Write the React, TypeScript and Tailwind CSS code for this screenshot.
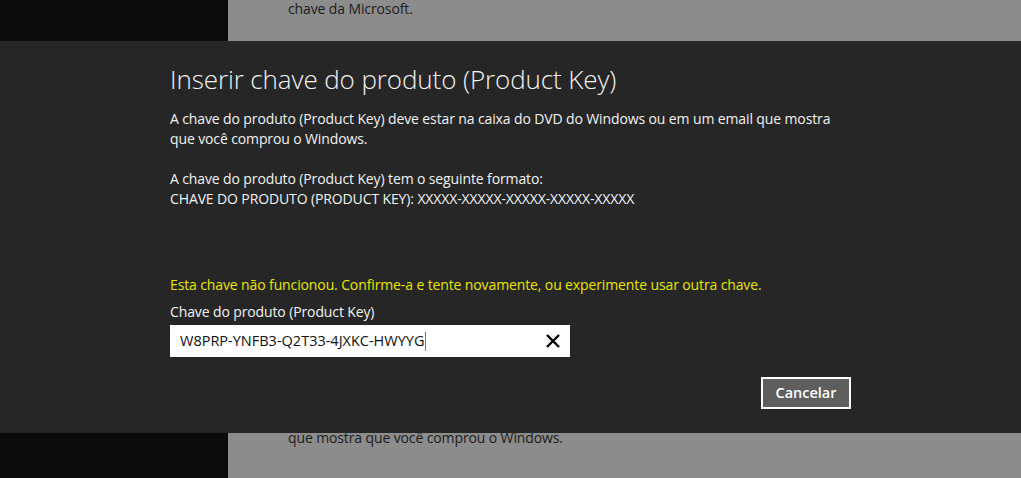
export default function App() {
  const font = { fontFamily: '"Open Sans", "Noto Sans", sans-serif' };

  return (
    <div className="relative flex h-[478px] w-[1021px] overflow-hidden" style={font}>
      {/* page behind the dialog */}
      <div className="w-[228px] shrink-0 bg-[#0b0b0b]" />
      <div className="flex flex-1 flex-col justify-between bg-[#8c8c8c] pl-[60px] text-[14px] leading-[20px] tracking-[-0.12px] text-[#1c1c1c]">
        <p className="-mt-[1px]">chave da Microsoft.</p>
        <p className="mb-[30px]">que mostra que você comprou o Windows.</p>
      </div>

      {/* dialog */}
      <div className="absolute left-0 right-0 top-[41px] h-[392px] bg-[#262626] pl-[170px] text-[#f2f2f2]">
        <h1 className="mt-[21px] text-[26px] font-light leading-[34px] tracking-[-0.1px]">
          Inserir chave do produto (Product Key)
        </h1>

        <div className="mt-[13px] w-[675px] text-[14px] leading-[20px] tracking-[-0.12px]">
          <p>
            A chave do produto (Product Key) deve estar na caixa do DVD do Windows ou em um email que mostra que você
            comprou o Windows.
          </p>
          <p className="mt-[20px]">A chave do produto (Product Key) tem o seguinte formato:</p>
          <p>CHAVE DO PRODUTO (PRODUCT KEY): XXXXX-XXXXX-XXXXX-XXXXX-XXXXX</p>
          <p className="mt-[66px] text-[#e6e600]">
            Esta chave não funcionou. Confirme-a e tente novamente, ou experimente usar outra chave.
          </p>
          <p className="mt-[7px]">Chave do produto (Product Key)</p>
        </div>

        <div className="mt-[3px] flex h-[32px] w-[400px] items-center bg-white pl-[10px] pr-[9px]">
          <span className="text-[14.5px] text-[#111]">W8PRP-YNFB3-Q2T33-4JXKC-HWYYG</span>
          <span className="ml-[1px] h-[19px] w-[1px] bg-[#777]" />
          <svg className="ml-auto" width="16" height="16" viewBox="0 0 16 16">
            <path d="M2 2 L14 14 M14 2 L2 14" stroke="#000" strokeWidth="2.4" />
          </svg>
        </div>

        <div className="mr-[170px] mt-[20px] flex justify-end">
          <button className="h-[32px] w-[90px] border-2 border-white bg-[#5e5e5e] text-[14.5px] font-semibold text-white">
            Cancelar
          </button>
        </div>
      </div>
    </div>
  );
}
